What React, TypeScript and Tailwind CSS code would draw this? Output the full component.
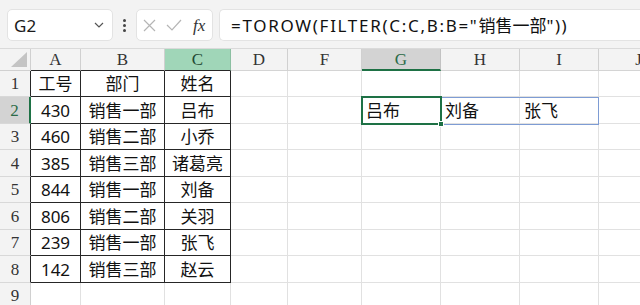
import React from "react";

const COLS = [
  { key: "", w: 31 },
  { key: "A", w: 50 },
  { key: "B", w: 84 },
  { key: "C", w: 66 },
  { key: "D", w: 57 },
  { key: "F", w: 74 },
  { key: "G", w: 79 },
  { key: "H", w: 79 },
  { key: "I", w: 79 },
  { key: "J", w: 80 },
];

const ROW_H = [26, 27, 26, 27, 26, 27, 26, 27, 26];

const DATA: string[][] = [
  ["工号", "部门", "姓名"],
  ["430", "销售一部", "吕布"],
  ["460", "销售二部", "小乔"],
  ["385", "销售三部", "诸葛亮"],
  ["844", "销售一部", "刘备"],
  ["806", "销售二部", "关羽"],
  ["239", "销售一部", "张飞"],
  ["142", "销售三部", "赵云"],
];

const SPILL = ["吕布", "刘备", "张飞"];

const cjk = { fontFamily: '"Noto Sans", "Noto Sans CJK SC", sans-serif' };
const serif = { fontFamily: '"Liberation Serif", serif' };

function FormulaBar() {
  return (
    <div className="flex h-[49px] items-start gap-0 bg-[#f3f3f3] pt-[9px] border-b border-[#dadada]">
      <div className="ml-[7px] flex h-[32px] w-[106px] items-center justify-between rounded-[5px] border border-[#e3e3e3] bg-white pl-[6px] pr-[8px]">
        <span className="text-[17px] leading-none text-[#1a1a1a]" style={cjk}>G2</span>
        <svg width="10" height="6" viewBox="0 0 10 6" fill="none">
          <path d="M1 1 L5 5 L9 1" stroke="#555" strokeWidth="1.2" />
        </svg>
      </div>
      <div className="flex h-[32px] w-[23px] flex-col items-center justify-center gap-[2px]">
        <span className="h-[3px] w-[3px] rounded-full bg-[#444]" />
        <span className="h-[3px] w-[3px] rounded-full bg-[#444]" />
        <span className="h-[3px] w-[3px] rounded-full bg-[#444]" />
      </div>
      <div className="flex h-[32px] w-[77px] items-center rounded-[5px] border border-[#e3e3e3] bg-white pl-[6px]">
        <svg width="13" height="13" viewBox="0 0 13 13" fill="none">
          <path d="M1 1 L12 12 M12 1 L1 12" stroke="#b5b5b5" strokeWidth="1.2" />
        </svg>
        <svg width="16" height="12" viewBox="0 0 16 12" fill="none" className="ml-[10px]">
          <path d="M1 6 L6 11 L15 1" stroke="#b5b5b5" strokeWidth="1.2" />
        </svg>
        <span className="ml-[11px] text-[17px] italic leading-none text-[#333]" style={serif}>fx</span>
      </div>
      <div className="ml-[6px] flex h-[32px] flex-1 items-center rounded-l-[5px] border border-r-0 border-[#e3e3e3] bg-white pl-[11px]">
        <span className="whitespace-nowrap text-[17px] leading-none text-[#111]" style={cjk}>
          <span className="tracking-[1.7px]">=TOROW(FILTER(C:C,B:B="</span>
          <span>销售一部</span>
          <span className="tracking-[1.5px]">"))</span>
        </span>
      </div>
    </div>
  );
}

function HeaderRow() {
  return (
    <div className="flex h-[22px]">
      {COLS.map((c, i) => {
        if (i === 0) {
          return (
            <div
              key={i}
              className="relative shrink-0 border-r border-b border-[#d0d0d0] bg-[#f3f3f3]"
              style={{ width: c.w }}
            >
              <svg className="absolute right-[3px] bottom-[3px]" width="16" height="15" viewBox="0 0 16 15">
                <path d="M16 0 L16 15 L0 15 Z" fill="#c4c4c4" />
              </svg>
            </div>
          );
        }
        const inTable = i >= 1 && i <= 3;
        let cls = "flex shrink-0 items-center justify-center border-r text-[17px] leading-none ";
        if (c.key === "C") {
          cls += "bg-[#a0d6b8] text-[#1f4a33] border-b border-b-[#262626] border-r-[#8cbfa2]";
        } else if (c.key === "G") {
          cls += "bg-[#d3d3d3] text-[#2b6b48] border-b-2 border-b-[#1e7145] border-r-[#c2c2c2]";
        } else if (inTable) {
          cls += "bg-[#f3f3f3] text-[#333] border-b border-b-[#262626] border-r-[#d0d0d0]";
        } else {
          cls += "bg-[#f3f3f3] text-[#333] border-b border-b-[#d4d4d4] border-r-[#d0d0d0]";
        }
        return (
          <div key={i} className={cls} style={{ width: c.w, ...serif }}>
            {c.key}
          </div>
        );
      })}
    </div>
  );
}

function Row({ r }: { r: number }) {
  const h = ROW_H[r - 1];
  const tableRow = r >= 1 && r <= 8;
  return (
    <div className="flex" style={{ height: h }}>
      {COLS.map((c, i) => {
        if (i === 0) {
          let cls =
            "flex shrink-0 items-center justify-center border-b border-b-[#d8d8d8] text-[17px] leading-none ";
          if (r === 2) {
            cls += "bg-[#d3d3d3] text-[#2b6b48] border-r-2 border-r-[#1e7145]";
          } else if (tableRow) {
            cls += "bg-[#f3f3f3] text-[#333] border-r border-r-[#262626]";
          } else {
            cls += "bg-[#f3f3f3] text-[#333] border-r border-r-[#d0d0d0]";
          }
          return (
            <div key={i} className={cls} style={{ width: c.w, ...serif }}>
              {r}
            </div>
          );
        }
        const inTable = tableRow && i >= 1 && i <= 3;
        let text = "";
        let align = "justify-center";
        if (inTable) {
          text = DATA[r - 1][i - 1];
        } else if (r === 2 && i >= 6 && i <= 8) {
          text = SPILL[i - 6];
          align = "justify-start pl-[4px]";
        }
        const cls = inTable
          ? "flex shrink-0 items-center border-r border-b border-[#262626] bg-white text-[17px] leading-none text-[#111] "
          : "flex shrink-0 items-center border-r border-b border-[#e1e1e1] bg-white text-[17px] leading-none text-[#111] ";
        return (
          <div key={i} className={cls + align} style={{ width: c.w, ...cjk }}>
            {text}
          </div>
        );
      })}
    </div>
  );
}

export default function App() {
  return (
    <div className="h-[305px] w-[640px] overflow-hidden bg-white">
      <FormulaBar />
      <div className="relative">
        <HeaderRow />
        {[1, 2, 3, 4, 5, 6, 7, 8, 9].map((r) => (
          <Row key={r} r={r} />
        ))}
        {/* spill range outline */}
        <div className="pointer-events-none absolute left-[361px] top-[48px] h-[28px] w-[238px] border-[1.5px] border-[#7e9cd4]" />
        {/* active cell */}
        <div className="pointer-events-none absolute left-[361px] top-[47px] h-[29px] w-[81px] border-2 border-[#1e7145]" />
        {/* fill handle */}
        <div className="pointer-events-none absolute left-[438px] top-[72px] h-[6px] w-[6px] border border-white bg-[#1e7145]" />
      </div>
    </div>
  );
}
